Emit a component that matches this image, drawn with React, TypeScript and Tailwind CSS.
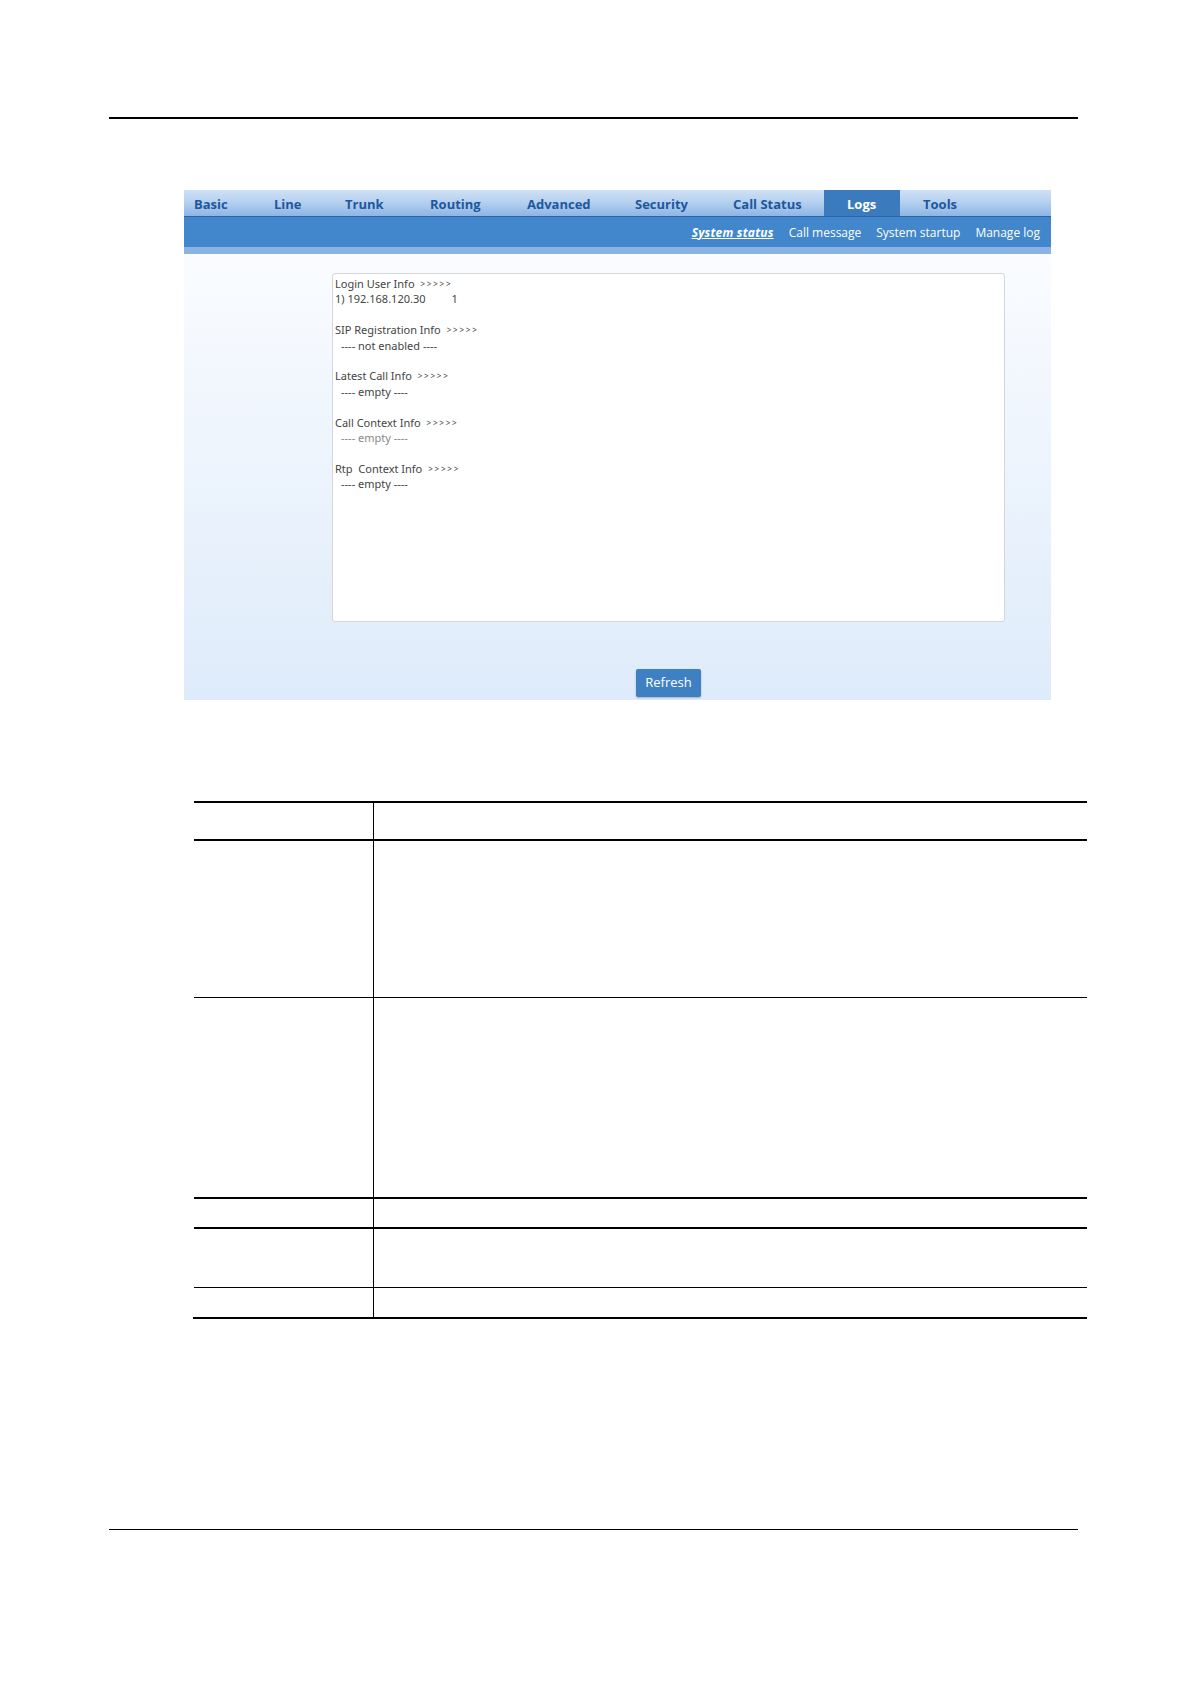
import React from "react";

const tabs = [
  { label: "Basic", w: "w-[67px]", pl: "pl-[10px]" },
  { label: "Line", w: "w-[72px]", pl: "pl-[23px]" },
  { label: "Trunk", w: "w-[84px]", pl: "pl-[22px]" },
  { label: "Routing", w: "w-[97px]", pl: "pl-[23px]" },
  { label: "Advanced", w: "w-[108px]", pl: "pl-[23px]" },
  { label: "Security", w: "w-[98px]", pl: "pl-[23px]" },
  { label: "Call Status", w: "w-[114px]", pl: "pl-[23px]" },
  { label: "Logs", w: "w-[76px]", pl: "pl-[23px]", active: true },
  { label: "Tools", w: "w-[90px]", pl: "pl-[23px]" },
];

const Arrows = () => (
  <span className="ml-[3px] text-[8px] tracking-[1.8px] align-[1px]">&gt;&gt;&gt;&gt;&gt;</span>
);

export default function App() {
  return (
    <div className="relative w-[1191px] h-[1684px] bg-white" style={{ fontFamily: '"Open Sans", "Noto Sans", sans-serif' }}>
      <div className="pt-[117px]">
        <div className="ml-[109px] w-[969px] h-[2px] bg-black" />
      </div>

      {/* Web UI panel */}
      <div className="ml-[184px] mt-[71px] w-[867px]">
        {/* main tabs */}
        <div className="flex h-[26px] bg-gradient-to-b from-[#cfe1f5] via-[#b3cfee] to-[#8db5e5]">
          {tabs.map((t) => (
            <div
              key={t.label}
              className={`${t.w} ${t.pl} h-full flex items-center pt-[3px] text-[13px] font-bold ${
                t.active ? "bg-[#3b7bbd] text-white" : "text-[#1d57a0]"
              }`}
            >
              {t.label}
            </div>
          ))}
        </div>
        <div className="h-[1px] bg-[#2a63a8]" />
        {/* sub nav */}
        <div className="h-[30px] bg-[#4286cb] flex items-center justify-end gap-[15px] pr-[11px] pt-[1px] text-[12px] text-white">
          <span className="font-bold italic underline tracking-[0.2px]">System status</span>
          <span>Call message</span>
          <span>System startup</span>
          <span>Manage log</span>
        </div>
        <div className="h-[7px] bg-[#8bb2e3]" />
        {/* content */}
        <div className="h-[446px] bg-gradient-to-b from-[#fafcff] to-[#deebfa] pt-[19px] pl-[148px]">
          <div className="w-[673px] h-[349px] bg-white border border-[#d3d6da] rounded-[3px] pt-[2px] pl-[2px] text-[11px] leading-[15.4px] text-[#444]" style={{ fontFamily: '"Noto Sans", "Open Sans", sans-serif' }}>
            <div>Login User Info <Arrows /></div>
            <div>1) 192.168.120.30<span className="ml-[26px]">1</span></div>
            <div>&nbsp;</div>
            <div>SIP Registration Info <Arrows /></div>
            <div className="pl-[6px]">---- not enabled ----</div>
            <div>&nbsp;</div>
            <div>Latest Call Info <Arrows /></div>
            <div className="pl-[6px]">---- empty ----</div>
            <div>&nbsp;</div>
            <div>Call Context Info <Arrows /></div>
            <div className="pl-[6px] text-[#888]">---- empty ----</div>
            <div>&nbsp;</div>
            <div>Rtp&nbsp; Context Info <Arrows /></div>
            <div className="pl-[6px]">---- empty ----</div>
          </div>
          <div className="w-[673px] flex justify-center mt-[47px]">
            <button className="w-[65px] h-[28px] bg-[#3f80c2] text-white text-[13px] rounded-[2px] shadow-[0_1px_2px_rgba(0,0,0,0.25)]">
              Refresh
            </button>
          </div>
        </div>
      </div>

      {/* table */}
      <div className="ml-[194px] mt-[101px] w-[893px]">
        <div className="h-[2px] bg-black" />
        <div className="flex h-[38px] border-b-2 border-black">
          <div className="w-[180px] border-r border-black" />
          <div className="flex-1" />
        </div>
        <div className="flex h-[157px] border-b border-black">
          <div className="w-[180px] border-r border-black" />
          <div className="flex-1" />
        </div>
        <div className="flex h-[201px] border-b-2 border-black">
          <div className="w-[180px] border-r border-black" />
          <div className="flex-1" />
        </div>
        <div className="flex h-[30px] border-b-2 border-black">
          <div className="w-[180px] border-r border-black" />
          <div className="flex-1" />
        </div>
        <div className="flex h-[59px] border-b border-black">
          <div className="w-[180px] border-r border-black" />
          <div className="flex-1" />
        </div>
        <div className="flex h-[29px]">
          <div className="w-[180px] border-r border-black" />
          <div className="flex-1" />
        </div>
        <div className="-ml-[1px] h-[2px] bg-black" />
      </div>

      <div className="ml-[109px] mt-[210px] w-[969px] h-[1px] bg-black" />
    </div>
  );
}
